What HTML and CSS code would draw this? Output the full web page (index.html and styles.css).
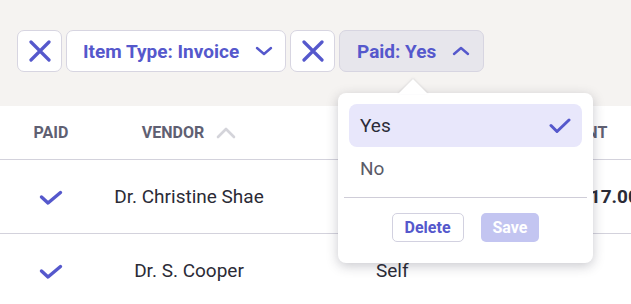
FILE: index.html
```html
<!DOCTYPE html>
<html lang="en">
<head>
    <meta charset="UTF-8">
    <meta name="viewport" content="width=device-width, initial-scale=1.0">
    <title>Expenses</title>
    <link rel="stylesheet" href="styles.css">
</head>
<body>

    <div class="filter-bar">
        <button class="chip chip-clear" aria-label="Clear item type">
            <svg width="22" height="22" viewBox="0 0 22 22"><path d="M2 2 L20 20 M20 2 L2 20" stroke="currentColor" stroke-width="3.2" stroke-linecap="round" fill="none"/></svg>
        </button>
        <button class="chip chip-filter chip-type">
            <span>Item Type: Invoice</span>
            <svg width="18" height="10" viewBox="0 0 18 10"><path d="M2 2 L9 8 L16 2" stroke="currentColor" stroke-width="2.4" stroke-linecap="round" stroke-linejoin="round" fill="none"/></svg>
        </button>
        <button class="chip chip-clear" aria-label="Clear paid">
            <svg width="22" height="22" viewBox="0 0 22 22"><path d="M2 2 L20 20 M20 2 L2 20" stroke="currentColor" stroke-width="3.2" stroke-linecap="round" fill="none"/></svg>
        </button>
        <div class="chip-wrap">
            <button class="chip chip-filter chip-open">
                <span>Paid: Yes</span>
                <svg width="18" height="10" viewBox="0 0 18 10"><path d="M2 8 L9 2 L16 8" stroke="currentColor" stroke-width="2.4" stroke-linecap="round" stroke-linejoin="round" fill="none"/></svg>
            </button>

            <!-- Dropdown for the Paid filter -->
            <div class="popover">
                <ul class="options">
                    <li class="option selected">
                        <span>Yes</span>
                        <svg width="22" height="16" viewBox="0 0 22 16"><path d="M2 7.5 L8 13.5 L20 2" stroke="currentColor" stroke-width="3" stroke-linecap="round" stroke-linejoin="round" fill="none"/></svg>
                    </li>
                    <li class="option">No</li>
                </ul>
                <div class="popover-actions">
                    <button class="btn btn-outline">Delete</button>
                    <button class="btn btn-primary" disabled>Save</button>
                </div>
            </div>
        </div>
    </div>

    <table class="expenses">
        <colgroup>
            <col class="col-paid">
            <col class="col-vendor">
            <col class="col-category">
            <col class="col-amount">
        </colgroup>
        <thead>
            <tr>
                <th class="center">Paid</th>
                <th class="center">
                    Vendor
                    <svg class="sort" width="20" height="12" viewBox="0 0 20 12"><path d="M2 10 L10 2 L18 10" stroke="currentColor" stroke-width="2.6" stroke-linecap="round" stroke-linejoin="round" fill="none"/></svg>
                </th>
                <th></th>
                <th class="amount-head">Amount</th>
            </tr>
        </thead>
        <tbody>
            <tr>
                <td class="center"><svg class="check" width="24" height="16" viewBox="0 0 24 16"><path d="M2.5 7 L9 13 L21.5 2.5" stroke="currentColor" stroke-width="3.4" stroke-linecap="round" stroke-linejoin="round" fill="none"/></svg></td>
                <td class="center">Dr. Christine Shae</td>
                <td></td>
                <td class="amount">$117.00</td>
            </tr>
            <tr>
                <td class="center"><svg class="check" width="24" height="16" viewBox="0 0 24 16"><path d="M2.5 7 L9 13 L21.5 2.5" stroke="currentColor" stroke-width="3.4" stroke-linecap="round" stroke-linejoin="round" fill="none"/></svg></td>
                <td class="center">Dr. S. Cooper</td>
                <td>Self</td>
                <td class="amount"></td>
            </tr>
        </tbody>
    </table>

</body>
</html>
```

FILE: styles.css
```css
/* Page */
body {
    margin: 0;
    font-family: Roboto, "Liberation Sans", sans-serif;
    background-color: white;
    color: #2b2b36;
    overflow: hidden;
    width: 631px;
    height: 304px;
}

/* Filter chips bar */
.filter-bar {
    display: flex;
    gap: 4px;
    height: 106px;
    box-sizing: border-box;
    padding: 30px 0 0 17px;
    background-color: #f5f3f1;
}

.chip {
    display: flex;
    align-items: center;
    height: 42px;
    box-sizing: border-box;
    border: 1px solid #d7d5e1;
    border-radius: 7px;
    background-color: white;
    color: #5558cc;
    font-family: inherit;
    font-size: 19px;
    font-weight: 700;
    cursor: pointer;
}

.chip-clear {
    width: 45px;
    justify-content: center;
    padding: 0;
}

.chip-filter {
    padding: 0 0 0 16px;
    gap: 16px;
}

.chip-type {
    width: 220px;
}

.chip-open {
    width: 145px;
    padding-left: 17px;
    background-color: #e7e6ec;
}

.chip-wrap {
    position: relative;
}

/* Dropdown */
.popover {
    position: absolute;
    top: 63px;
    left: -1px;
    width: 255px;
    height: 170px;
    box-sizing: border-box;
    padding: 11px 11px 0;
    background: white;
    border-radius: 8px;
    box-shadow: 0 3px 12px rgba(40, 40, 60, 0.25);
    z-index: 2;
}

.popover::before {
    content: "";
    position: absolute;
    top: -14px;
    left: 60px;
    border-left: 15px solid transparent;
    border-right: 15px solid transparent;
    border-bottom: 15px solid white;
    filter: drop-shadow(0 -1px 1px rgba(40, 40, 60, 0.12));
}

.options {
    list-style: none;
    margin: 0;
    padding: 0;
}

.option {
    display: flex;
    align-items: center;
    justify-content: space-between;
    height: 43px;
    padding: 0 11px;
    border-radius: 8px;
    font-size: 19px;
    color: #5b5b68;
}

.option.selected {
    background-color: #e8e7fb;
    color: #2b2b38;
}

.option.selected svg {
    color: #5558cc;
}

.popover-actions {
    display: flex;
    justify-content: center;
    gap: 17px;
    margin: 7px -5px 0;
    padding-top: 15px;
    border-top: 1px solid #cfcdd8;
}

.btn {
    height: 29px;
    box-sizing: border-box;
    border-radius: 5px;
    font-family: inherit;
    font-size: 16px;
    font-weight: 700;
    padding: 0 12px;
}

.btn-outline {
    background: white;
    border: 1px solid #d2d1e0;
    color: #5558cc;
}

.btn-primary {
    background: #c3c5f1;
    border: none;
    color: white;
    padding: 0 12px;
}

/* Table */
.expenses {
    border-collapse: collapse;
    table-layout: fixed;
    width: 700px;
}

.col-paid { width: 102px; }
.col-vendor { width: 174px; }
.col-category { width: 267px; }
.col-amount { width: 157px; }

.expenses th {
    height: 53px;
    font-size: 16px;
    font-weight: 700;
    text-transform: uppercase;
    color: #5f6072;
    text-align: left;
    border-bottom: 1px solid #d3d2dc;
    padding: 0;
}

.expenses td {
    height: 73px;
    font-size: 19px;
    border-bottom: 1px solid #d3d2dc;
    padding: 0 0 0 100px;
}

.expenses .amount-head {
    text-indent: -3px;
}

.expenses .center {
    text-align: center;
    padding: 0;
}

.sort {
    color: #d4d4da;
    margin-left: 8px;
    vertical-align: -1px;
}

.check {
    color: #5558cc;
    display: block;
    margin: 3px auto 0;
}

.expenses td.amount {
    font-weight: 700;
    padding-left: 25px;
}
```
